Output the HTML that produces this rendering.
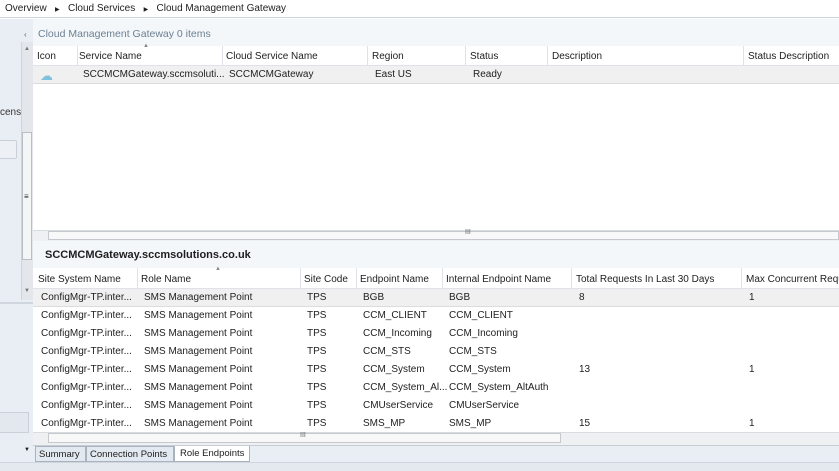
<!DOCTYPE html>
<html><head><meta charset="utf-8"><style>
*{margin:0;padding:0;box-sizing:border-box}
body{width:839px;height:471px;overflow:hidden;background:#fff;font-family:"Liberation Sans",sans-serif;font-size:10px;color:#1e1e1e;position:relative}
.a{position:absolute;white-space:nowrap}
.hdr{position:absolute;left:33px;right:0;background:#fff;border-bottom:1px solid #dfe3e8}
.div{position:absolute;top:0;bottom:0;width:1px;background:#dfe3e8}
.row{position:absolute;left:33px;right:0;height:18px}
.row span{position:absolute;top:3px}
</style></head><body>
<div class="a" style="left:0;top:0;width:839px;height:18px;background:#fff;border-bottom:1px solid #cdd6e0"></div>
<div class="a" style="left:5px;top:3px">Overview &nbsp;&nbsp;<span style="font-size:6px">▶</span>&nbsp;&nbsp; Cloud Services &nbsp;&nbsp;<span style="font-size:6px">▶</span>&nbsp;&nbsp; Cloud Management Gateway</div>
<div class="a" style="left:0;top:19px;width:33px;height:443px;background:#e9eef4"></div>
<div class="a" style="left:0;top:107px;color:#333">cens</div>
<div class="a" style="left:-4px;top:140px;width:21px;height:19px;border:1px solid #c9d0d8;background:#edf1f5;border-radius:2px"></div>
<div class="a" style="left:21px;top:42px;width:12px;height:258px;background:#e3e6ea;border-left:1px solid #cfd4da"></div>
<div class="a" style="left:22px;top:132px;width:10px;height:128px;background:#f4f5f7;border:1px solid #b9bec5"></div>
<div class="a" style="left:24px;top:192px;font-size:8px">≡</div>
<div class="a" style="left:24px;top:46px;font-size:6px;color:#777">▲</div>
<div class="a" style="left:24px;top:288px;font-size:6px;color:#777">▼</div>
<div class="a" style="left:0;top:302px;width:33px;height:2px;background:#d0d6dd"></div>
<div class="a" style="left:-4px;top:412px;width:33px;height:21px;border:1px solid #c9d0d8;background:#e3e8ee"></div>
<div class="a" style="left:24px;top:447px;font-size:6px">▼</div>
<div class="a" style="left:33px;top:19px;width:806px;height:28px;background:#f4f7fa"></div>
<div class="a" style="left:24px;top:30px;font-size:8px;color:#666">‹</div>
<div class="a" style="left:38px;top:28px;color:#6d8193;font-size:10.5px">Cloud Management Gateway 0 items</div>
<div class="hdr" style="top:46px;height:20px;background:#fff">
<div class="div" style="left:44px"></div><div class="div" style="left:189px"></div><div class="div" style="left:334px"></div><div class="div" style="left:432px"></div><div class="div" style="left:514px"></div><div class="div" style="left:710px"></div>
<span class="a" style="left:4px;top:5px">Icon</span><span class="a" style="left:46px;top:5px">Service Name</span><span class="a" style="left:193px;top:5px">Cloud Service Name</span><span class="a" style="left:339px;top:5px">Region</span><span class="a" style="left:437px;top:5px">Status</span><span class="a" style="left:519px;top:5px">Description</span><span class="a" style="left:715px;top:5px">Status Description</span>
<span class="a" style="left:110px;top:-3px;font-size:6px;color:#888">▲</span></div>
<div class="row" style="top:66px;background:#f0f0f0;border-bottom:1px solid #dcdcdc">
<span style="left:7px;top:2px;color:#7fc1dc;font-size:13px">☁</span><span style="left:50px">SCCMCMGateway.sccmsoluti...</span><span style="left:196px">SCCMCMGateway</span><span style="left:342px">East US</span><span style="left:440px">Ready</span></div>
<div class="a" style="left:33px;top:230px;width:806px;height:11px;background:#eef0f2;border-top:1px solid #d8dce0"></div>
<div class="a" style="left:48px;top:231px;width:791px;height:9px;background:#f8f8f8;border:1px solid #c5c9ce"></div>
<div class="a" style="left:465px;top:229px;font-size:7px;color:#666">III</div>
<div class="a" style="left:33px;top:241px;width:806px;height:27px;background:#f4f7fa"></div>
<div class="a" style="left:45px;top:249px;font-weight:bold;font-size:11px">SCCMCMGateway.sccmsolutions.co.uk</div>
<div class="hdr" style="top:268px;height:21px;background:#fff">
<div class="div" style="left:104px"></div><div class="div" style="left:267px"></div><div class="div" style="left:323px"></div><div class="div" style="left:409px"></div><div class="div" style="left:538px"></div><div class="div" style="left:708px"></div>
<span class="a" style="left:5px;top:6px">Site System Name</span><span class="a" style="left:108px;top:6px">Role Name</span><span class="a" style="left:271px;top:6px">Site Code</span><span class="a" style="left:327px;top:6px">Endpoint Name</span><span class="a" style="left:413px;top:6px">Internal Endpoint Name</span><span class="a" style="left:543px;top:6px">Total Requests In Last 30 Days</span><span class="a" style="left:713px;top:6px">Max Concurrent Requ</span>
<span class="a" style="left:182px;top:-2px;font-size:6px;color:#888">▲</span></div>
<div class="row" style="top:289px;background:#f0f0f0;border-bottom:1px solid #dcdcdc"><span style="left:8px">ConfigMgr-TP.inter...</span><span style="left:111px">SMS Management Point</span><span style="left:274px">TPS</span><span style="left:330px">BGB</span><span style="left:416px">BGB</span><span style="left:546px">8</span><span style="left:716px">1</span></div>
<div class="row" style="top:307px"><span style="left:8px">ConfigMgr-TP.inter...</span><span style="left:111px">SMS Management Point</span><span style="left:274px">TPS</span><span style="left:330px">CCM_CLIENT</span><span style="left:416px">CCM_CLIENT</span></div>
<div class="row" style="top:325px"><span style="left:8px">ConfigMgr-TP.inter...</span><span style="left:111px">SMS Management Point</span><span style="left:274px">TPS</span><span style="left:330px">CCM_Incoming</span><span style="left:416px">CCM_Incoming</span></div>
<div class="row" style="top:343px"><span style="left:8px">ConfigMgr-TP.inter...</span><span style="left:111px">SMS Management Point</span><span style="left:274px">TPS</span><span style="left:330px">CCM_STS</span><span style="left:416px">CCM_STS</span></div>
<div class="row" style="top:361px"><span style="left:8px">ConfigMgr-TP.inter...</span><span style="left:111px">SMS Management Point</span><span style="left:274px">TPS</span><span style="left:330px">CCM_System</span><span style="left:416px">CCM_System</span><span style="left:546px">13</span><span style="left:716px">1</span></div>
<div class="row" style="top:379px"><span style="left:8px">ConfigMgr-TP.inter...</span><span style="left:111px">SMS Management Point</span><span style="left:274px">TPS</span><span style="left:330px">CCM_System_Al...</span><span style="left:416px">CCM_System_AltAuth</span></div>
<div class="row" style="top:397px"><span style="left:8px">ConfigMgr-TP.inter...</span><span style="left:111px">SMS Management Point</span><span style="left:274px">TPS</span><span style="left:330px">CMUserService</span><span style="left:416px">CMUserService</span></div>
<div class="row" style="top:415px"><span style="left:8px">ConfigMgr-TP.inter...</span><span style="left:111px">SMS Management Point</span><span style="left:274px">TPS</span><span style="left:330px">SMS_MP</span><span style="left:416px">SMS_MP</span><span style="left:546px">15</span><span style="left:716px">1</span></div>
<div class="a" style="left:33px;top:432px;width:806px;height:13px;background:#eef0f2;border-top:1px solid #d8dce0"></div>
<div class="a" style="left:48px;top:433px;width:513px;height:10px;background:#f8f8f8;border:1px solid #c5c9ce"></div>
<div class="a" style="left:300px;top:432px;font-size:7px;color:#666">III</div>
<div class="a" style="left:33px;top:445px;width:806px;height:17px;background:#e9eef4;border-top:1px solid #c8ced6"></div>
<div class="a" style="left:35px;top:446px;width:51px;height:16px;border:1px solid #aab3bd;background:#e3e9f0;padding:2px 3px;font-size:9.5px">Summary</div>
<div class="a" style="left:86px;top:446px;width:88px;height:16px;border:1px solid #aab3bd;background:#e3e9f0;padding:2px 3px;font-size:9.5px">Connection Points</div>
<div class="a" style="left:174px;top:446px;width:76px;height:16px;border:1px solid #aab3bd;border-top:none;background:#fff;padding:2px 5px;font-size:9.5px">Role Endpoints</div>
<div class="a" style="left:0;top:462px;width:839px;height:9px;background:#e4e9ef;border-top:1px solid #cfd6de"></div>
</body></html>
